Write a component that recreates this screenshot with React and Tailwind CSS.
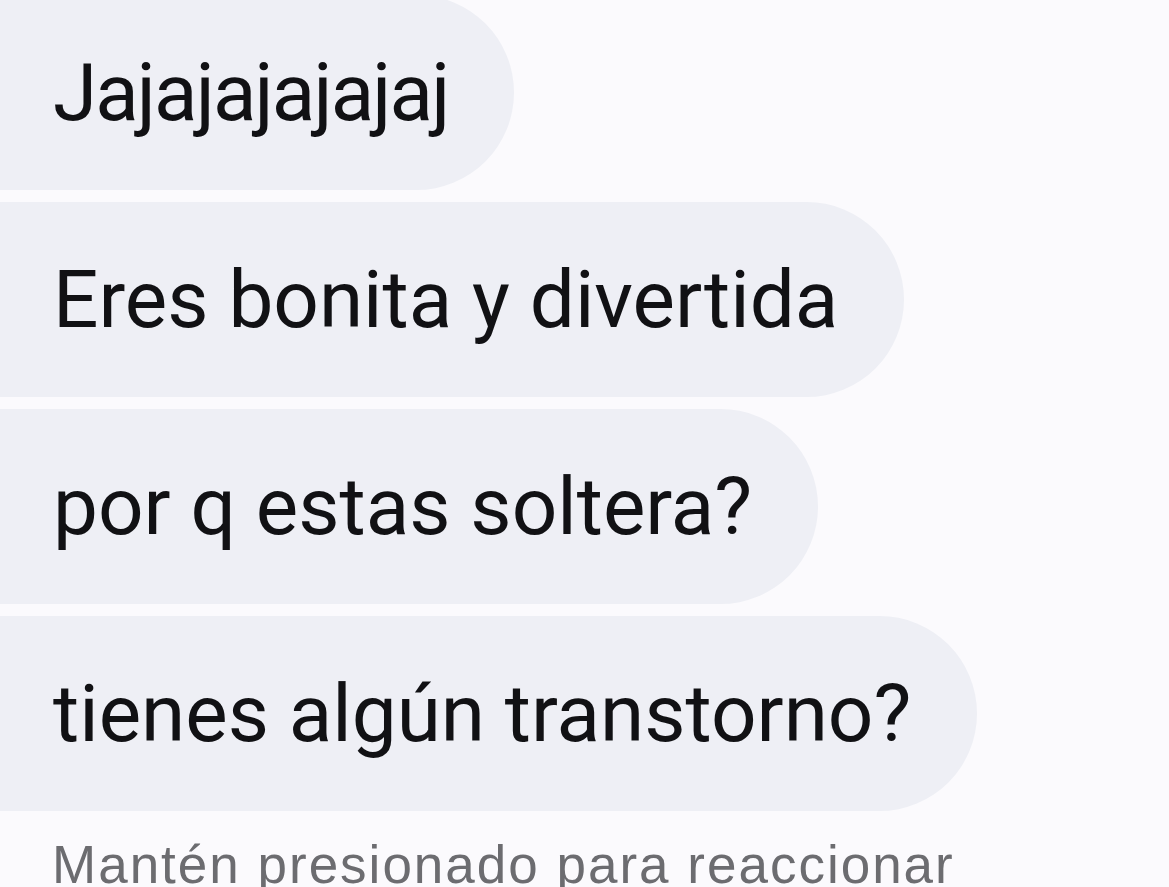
const messages = [
  { text: 'Jajajajajajaj', tight: true },
  { text: 'Eres bonita y divertida' },
  { text: 'por q estas soltera?' },
  { text: 'tienes algún transtorno?' },
]

function Bubble({ text, tight }) {
  return (
    <div className="flex h-[195px] items-center self-start rounded-l-[28px] rounded-r-full bg-[#eeeff5] pl-[53px] pr-[66px]">
      <span
        className={
          'whitespace-nowrap text-[80px] leading-none text-[#111114] ' + (tight ? 'tracking-[-1.9px]' : '')
        }
      >
        {text}
      </span>
    </div>
  )
}

export default function App() {
  return (
    <div
      className="flex h-[887px] w-[1169px] flex-col overflow-hidden bg-[#fbfafd]"
      style={{ fontFamily: 'Roboto, "Noto Sans", sans-serif' }}
    >
      <div className="-mt-[5px] flex flex-col gap-[12px]">
        {messages.map((m, i) => (
          <Bubble key={i} text={m.text} tight={m.tight} />
        ))}
      </div>
      <p
        className="mt-[27px] pl-[52px] text-[53px] leading-none tracking-[2px] whitespace-nowrap text-[#6c6c70]"
        style={{ fontFamily: '"Liberation Sans", Arial, sans-serif' }}
      >
        Mantén presionado para reaccionar
      </p>
    </div>
  )
}
